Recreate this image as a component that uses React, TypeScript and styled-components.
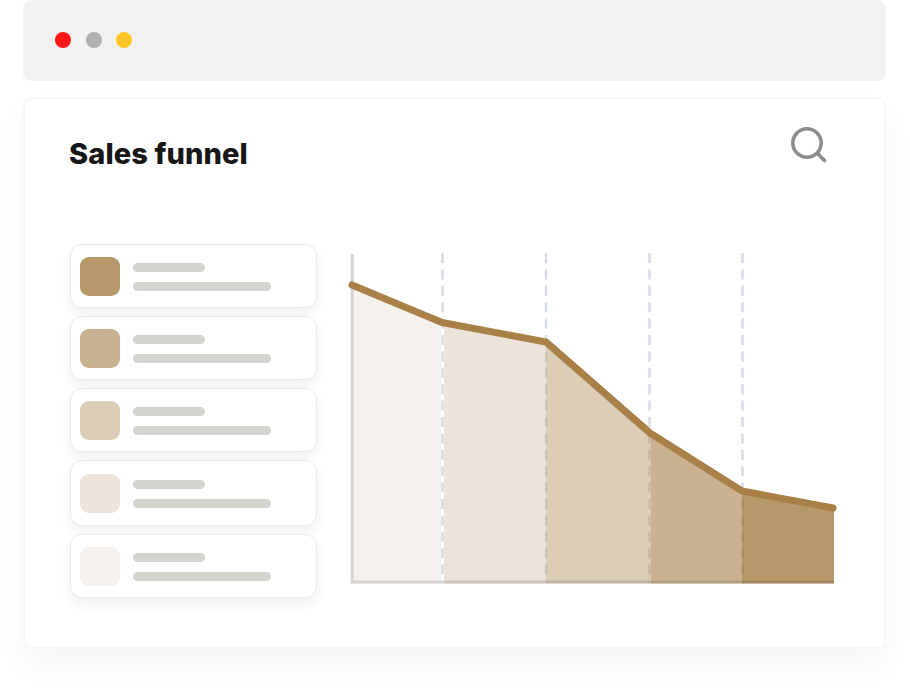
import { ReactElement } from 'react'
import styled, { createGlobalStyle } from 'styled-components'

const GlobalStyle = createGlobalStyle`
  html, body {
    margin: 0;
    background: #ffffff;
  }
  body {
    width: 910px;
    height: 688px;
    overflow: hidden;
    font-family: Inter, 'Liberation Sans', sans-serif;
  }
`
const Page = styled.div`
  box-sizing: border-box;
  width: 910px;
  height: 688px;
  padding: 0 24px 0 23px;
  display: flex;
  flex-direction: column;
  gap: 16px;
`
const TitleBar = styled.div`
  box-sizing: border-box;
  height: 81px;
  padding: 0 0 1px 31px;
  display: flex;
  align-items: center;
  gap: 14.7px;
  background: #f1f1f1;
  border: 1px solid #f4f4f4;
  border-radius: 8px;
`
const Dot = styled.span<{ $color: string }>`
  width: 16px;
  height: 16px;
  border-radius: 50%;
  background: ${(props) => props.$color};
`
const Card = styled.div`
  box-sizing: border-box;
  height: 552px;
  padding: 0 0 0 45px;
  background: #ffffff;
  border: 2px solid #f7f7f7;
  border-radius: 8px;
  box-shadow: 0 16px 32px rgba(30, 30, 30, 0.04);
`
const Header = styled.div`
  height: 145px;
  padding-right: 57px;
  display: flex;
  justify-content: space-between;
  align-items: flex-start;
`
const Title = styled.h1`
  margin: 36px 0 0 -1px;
  font-size: 29px;
  line-height: 37px;
  font-weight: 800;
  letter-spacing: 0.1px;
  color: #161616;
`
const SearchIcon = styled.svg`
  display: block;
  margin-top: 28px;
  width: 36px;
  height: 36px;
`
const Body = styled.div`
  display: flex;
  gap: 31px;
  align-items: flex-start;
`
const List = styled.div`
  width: 247px;
  display: flex;
  flex-direction: column;
  gap: 8px;
`
const Row = styled.div<{ $height: number }>`
  box-sizing: border-box;
  height: ${(props) => props.$height}px;
  padding-left: 9px;
  display: flex;
  align-items: center;
  gap: 13px;
  background: #ffffff;
  border: 1px solid #e9e9f2;
  border-radius: 12px;
  box-shadow: 0 6px 12px rgba(40, 40, 70, 0.07);
`
const Swatch = styled.div<{ $color: string }>`
  width: 39.5px;
  height: 39.5px;
  margin-top: 1px;
  border-radius: 9px;
  background: ${(props) => props.$color};
`
const Lines = styled.div`
  display: flex;
  flex-direction: column;
  gap: 10px;
  padding-top: 1px;
`
const Line = styled.div<{ $width: number }>`
  width: ${(props) => props.$width}px;
  height: 9px;
  border-radius: 5px;
  background: #d4d3ce;
`
const Chart = styled.svg`
  display: block;
  width: 490px;
  height: 340px;
`

const rows = [
  { color: '#b6986b', height: 64 },
  { color: '#cab192', height: 64 },
  { color: '#dbcdb6', height: 64 },
  { color: '#ece4db', height: 66 },
  { color: '#f5f2ed', height: 64 },
]

// area under the line, one band per step
const bands = [
  { points: '352,285 441,322.5 441,583.5 352,583.5', color: '#f5f2ed' },
  { points: '444,322.5 546,342 546,583.5 444,583.5', color: '#ece4db' },
  { points: '546,342 651,433 651,583.5 546,583.5', color: '#dbcdb6' },
  { points: '651,433 742,491 742,583.5 651,583.5', color: '#cab192' },
  { points: '742,491 834,508 834,583.5 742,583.5', color: '#b6986b' },
]

const gridX = [442.5, 546, 649.5, 742.5]

function App(): ReactElement {
  return (
    <Page>
      <GlobalStyle />
      <TitleBar>
        <Dot $color="#ff1616" />
        <Dot $color="#b0b0b0" />
        <Dot $color="#ffc72a" />
      </TitleBar>
      <Card>
        <Header>
          <Title>Sales funnel</Title>
          <SearchIcon viewBox="0 0 36 36" fill="none" stroke="#8c8c8c" strokeWidth="3.6" strokeLinecap="round">
            <circle cx="16" cy="16" r="14.2" />
            <path d="M26.5 26.5 L33.5 33.5" />
          </SearchIcon>
        </Header>
        <Body>
          <List>
            {rows.map((row) => (
              <Row key={row.color} $height={row.height}>
                <Swatch $color={row.color} />
                <Lines>
                  <Line $width={72} />
                  <Line $width={138} />
                </Lines>
              </Row>
            ))}
          </List>
          <Chart viewBox="348 244 490 340">
            <defs>
              <clipPath id="under-line">
                {bands.map((band) => (
                  <polygon key={band.color} points={band.points} />
                ))}
              </clipPath>
            </defs>
            <g stroke="#d5dbe2" strokeWidth="2.4" fill="none">
              <path d="M352.2 254 V582 H834" strokeWidth="3" stroke="#cdd3d9" />
              {gridX.map((x) => (
                <path key={x} d={`M${x} 253 V582`} strokeDasharray="10 6.4" />
              ))}
            </g>
            {bands.map((band) => (
              <polygon key={band.color} points={band.points} fill={band.color} />
            ))}
            <g stroke="#3a3a3a" strokeOpacity="0.13" strokeWidth="2.4" fill="none" clipPath="url(#under-line)">
              <path d="M352.2 254 V582 H834" strokeWidth="3" strokeOpacity="0.17" />
              {gridX.map((x) => (
                <path key={x} d={`M${x} 253 V582`} strokeDasharray="10 6.4" />
              ))}
            </g>
            <polyline
              points="352,285 442,322.5 546,342 650,433 742,491 833,508"
              fill="none"
              stroke="#a98047"
              strokeWidth="7"
              strokeLinecap="round"
              strokeLinejoin="round"
            />
          </Chart>
        </Body>
      </Card>
    </Page>
  )
}

export default App
